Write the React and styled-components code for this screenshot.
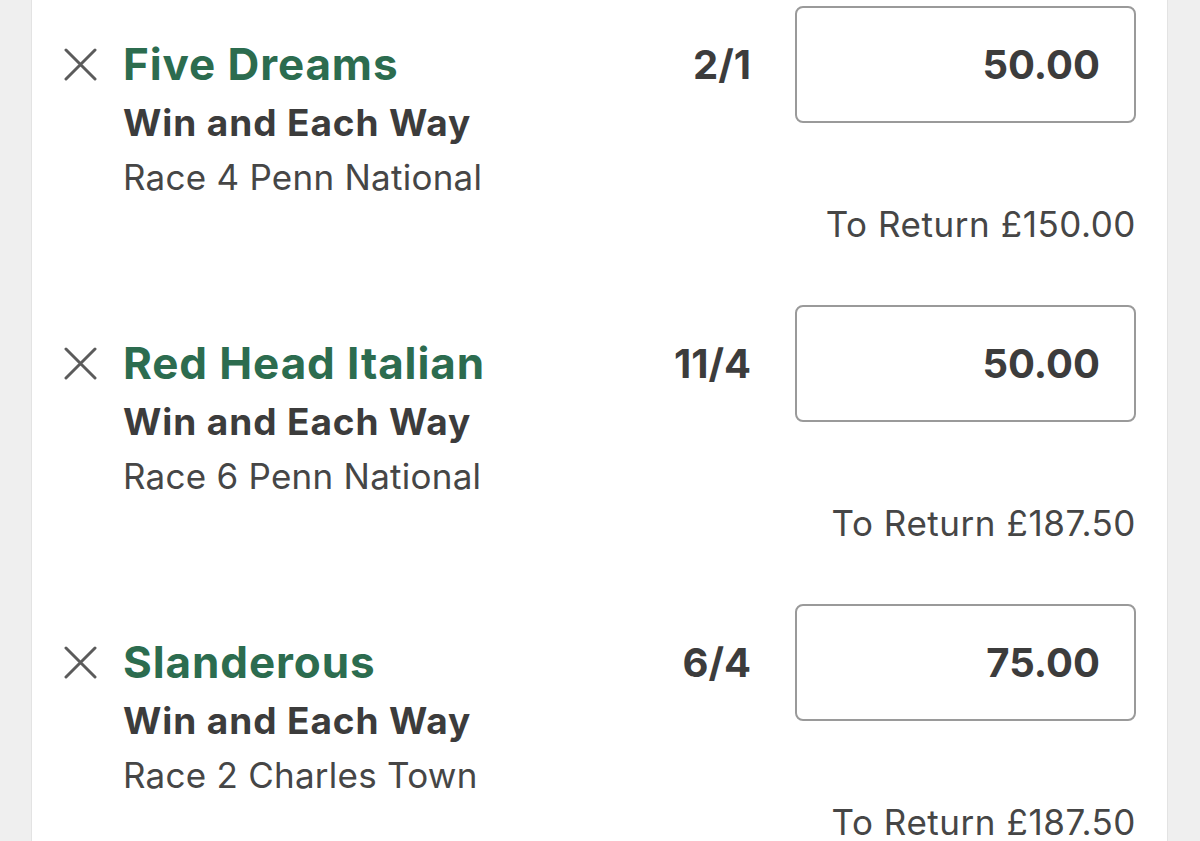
import styled, { createGlobalStyle } from 'styled-components';

const bets = [
  { id: 1, name: 'Five Dreams', market: 'Win and Each Way', race: 'Race 4 Penn National', odds: '2/1', stake: '50.00', toReturn: '150.00' },
  { id: 2, name: 'Red Head Italian', market: 'Win and Each Way', race: 'Race 6 Penn National', odds: '11/4', stake: '50.00', toReturn: '187.50' },
  { id: 3, name: 'Slanderous', market: 'Win and Each Way', race: 'Race 2 Charles Town', odds: '6/4', stake: '75.00', toReturn: '187.50' },
];

function RemoveIcon() {
  return (
    <svg width="33" height="33" viewBox="0 0 33 33" fill="none">
      <path d="M2 2L31 31M31 2L2 31" stroke="#5b5b5b" strokeWidth="3" strokeLinecap="round" />
    </svg>
  );
}

export default function App() {
  return (
    <>
      <GlobalStyle />
      <Panel>
        {bets.map((bet) => (
          <BetRow key={bet.id}>
            <BetTop>
              <RemoveButton aria-label="Remove selection">
                <RemoveIcon />
              </RemoveButton>
              <Details>
                <Selection>{bet.name}</Selection>
                <Market>{bet.market}</Market>
                <Race>{bet.race}</Race>
              </Details>
              <StakeGroup>
                <Odds>{bet.odds}</Odds>
                <StakeInput readOnly value={bet.stake} />
              </StakeGroup>
            </BetTop>
            <Return>To Return £{bet.toReturn}</Return>
          </BetRow>
        ))}
      </Panel>
    </>
  );
}

const GlobalStyle = createGlobalStyle`
  html, body {
    margin: 0;
    background: #efefef;
    font-family: Inter, "Noto Sans", sans-serif;
  }
`;

const Panel = styled.div`
  margin: 0 32px 0 31px;
  height: 841px;
  overflow: hidden;
  box-sizing: border-box;
  background: #ffffff;
  border-left: 1px solid #e3e3e3;
  border-right: 1px solid #e3e3e3;
  padding: 6px 31px 0 32px;
`;

const BetRow = styled.div`
  display: flex;
  flex-direction: column;
  height: 299px;
`;

const BetTop = styled.div`
  display: flex;
  align-items: flex-start;
`;

const RemoveButton = styled.button`
  border: none;
  background: none;
  padding: 0;
  margin: 42px 26px 0 0;
  width: 33px;
  height: 33px;
  display: flex;
  cursor: pointer;
`;

const Details = styled.div`
  flex: 1;
  display: flex;
  flex-direction: column;
  padding-top: 29px;
`;

const Selection = styled.div`
  font-size: 44px;
  line-height: 58px;
  font-weight: 700;
  letter-spacing: 0.9px;
  color: #2c6c4f;
`;

const Market = styled.div`
  font-size: 37px;
  line-height: 60px;
  font-weight: 700;
  letter-spacing: 0.9px;
  color: #3c3c3c;
`;

const Race = styled.div`
  font-size: 35px;
  line-height: 48px;
  font-weight: 400;
  letter-spacing: 0.25px;
  color: #464646;
`;

const StakeGroup = styled.div`
  display: flex;
  align-items: center;
  gap: 44px;
`;

const Odds = styled.div`
  font-size: 40px;
  font-weight: 700;
  color: #3c3c3c;
`;

const StakeInput = styled.input`
  box-sizing: border-box;
  width: 341px;
  height: 117px;
  border: 2px solid #9a9a9a;
  border-radius: 8px;
  padding: 0 34px 0 16px;
  text-align: right;
  font-family: Inter, "Noto Sans", sans-serif;
  font-size: 40px;
  font-weight: 700;
  color: #3c3c3c;
  background: #ffffff;
  outline: none;
`;

const Return = styled.div`
  align-self: flex-end;
  font-size: 35px;
  line-height: 46px;
  font-weight: 400;
  letter-spacing: 0.55px;
  color: #464646;
`;
